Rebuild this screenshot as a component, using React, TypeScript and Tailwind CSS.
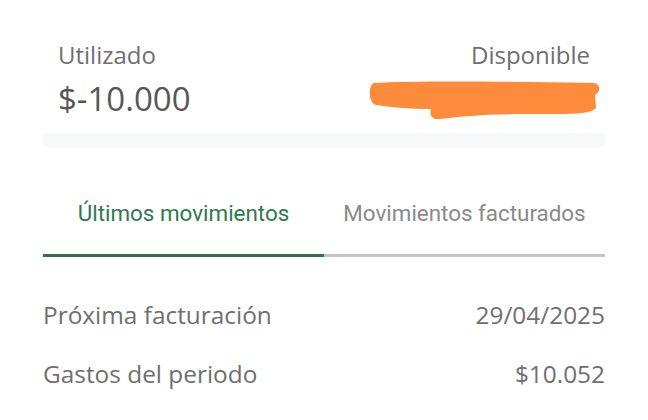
export default function App() {
  return (
    <div className="w-[648px] h-[420px] bg-white overflow-hidden font-['Open_Sans',sans-serif]">
      {/* cupo card */}
      <div className="mx-[43px] pt-[40px]">
        <div className="relative flex justify-between px-[15px] pb-[14px]">
          <div>
            <div className="text-[24px] leading-[30px] text-[#6f6f6f]">Utilizado</div>
            <div className="mt-[9px] text-[33px] leading-[40px] text-[#575757]">$-10.000</div>
          </div>
          <div className="text-right">
            <div className="text-[24px] leading-[30px] text-[#6f6f6f]">Disponible</div>
          </div>
          <svg className="absolute left-[325px] top-[41px]" width="232" height="40" viewBox="0 0 232 40">
            <path
              d="M6 2 C40 0 120 0 226 2 C233 3 233 11 227 14 L228 27 C222 34 200 33 160 33 C120 33 96 35 72 38 C64 39 61 34 63 28 C40 28 22 26 8 24 C0 22 0 4 6 2 Z"
              fill="#fd8b3b"
            />
          </svg>
        </div>
        <div className="h-[15px] bg-[#f7f8fa] rounded-b-md" />
      </div>

      {/* tabs */}
      <div className="mx-[43px] mt-[51px] flex font-['Roboto',sans-serif]">
        <div className="flex-1 border-b-[3px] border-[#2e7048] pb-[27px] text-center text-[22.4px] leading-[28px] text-[#2e7a4e]">
          Últimos movimientos
        </div>
        <div className="flex-1 border-b-[3px] border-[#c4c4c4] pb-[27px] text-center text-[22.4px] leading-[28px] text-[#8a8a8a]">
          Movimientos facturados
        </div>
      </div>

      {/* detalle */}
      <div className="mx-[43px] mt-[43px] flex flex-col gap-[29px] text-[24.4px] leading-[30px] text-[#6f6f6f]">
        <div className="flex justify-between">
          <span>Próxima facturación</span>
          <span>29/04/2025</span>
        </div>
        <div className="flex justify-between">
          <span>Gastos del periodo</span>
          <span>$10.052</span>
        </div>
      </div>
    </div>
  )
}
